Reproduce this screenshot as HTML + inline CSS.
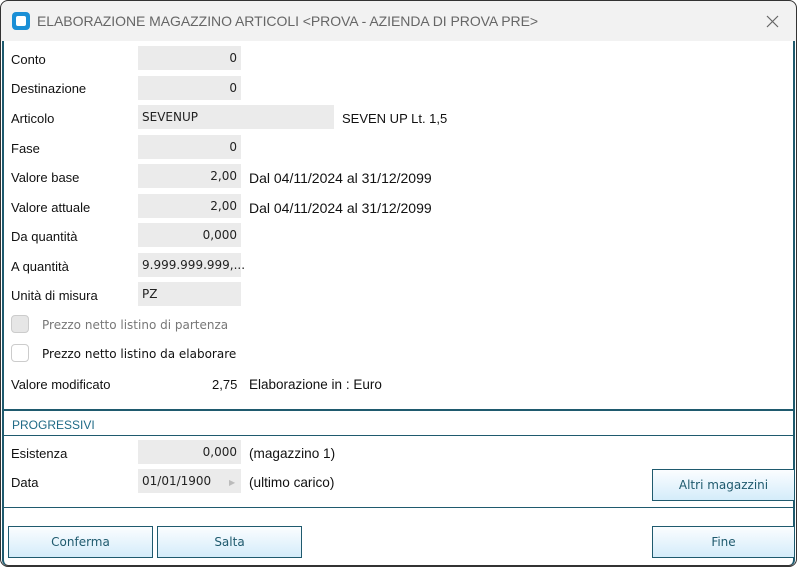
<!DOCTYPE html>
<html><head><meta charset="utf-8"><style>
*{margin:0;padding:0;box-sizing:border-box}
body{width:797px;height:568px;background:#fff;font-family:"DejaVu Sans","Liberation Sans",sans-serif;position:relative;overflow:hidden}
.win{position:absolute;left:0;top:0;width:797px;height:567px;border-radius:8px;overflow:hidden;background:#fff}
.outline{position:absolute;left:0;top:0;width:797px;height:567px;border:1px solid #333;border-radius:8px;z-index:5}
.title{position:absolute;left:0;top:0;width:797px;height:41px;background:#f2f2f2}
.title span{position:absolute;left:37px;top:13px;font-size:14px;color:#666;font-family:"Liberation Sans",sans-serif;letter-spacing:-0.05px}
.ico{position:absolute;left:12px;top:12px;width:18px;height:18px;background:#1a8fd6;border-radius:4px}
.ico:after{content:"";position:absolute;left:4px;top:4px;width:10px;height:10px;background:#fff;border-radius:2px}
.frame{position:absolute;left:2px;top:41px;width:793px;height:525px;border-left:2px solid #1f5a6e;border-right:2px solid #1f5a6e;border-bottom:1px solid #333;border-radius:0 0 6px 6px}
.l{position:absolute;left:11px;font-size:13px;color:#111;font-family:"Liberation Sans",sans-serif;margin-top:1px}
.f{position:absolute;left:138px;width:103px;height:24px;background:#ebebeb;font-size:12px;color:#222;line-height:25px;padding:0 4px;text-align:right}
.t{position:absolute;font-size:13px;color:#111;font-family:"Liberation Sans",sans-serif;margin-top:1px}
.w{font-size:14px}
.cb{position:absolute;left:11px;width:18px;height:18px;border:1px solid #ccc;border-radius:4px;background:#fff}
.hl{position:absolute;left:3px;width:791px;background:#1f5a6e}
.btn{position:absolute;height:32px;border:1px solid #1f5a6e;background:linear-gradient(#fbfdff,#d4ecfa);color:#1f5a6e;font-size:12px;text-align:center;line-height:31px}
</style></head><body>
<div class="win">
<div class="title"><div class="ico"></div><span>ELABORAZIONE MAGAZZINO ARTICOLI &lt;PROVA - AZIENDA DI PROVA PRE&gt;</span>
<svg style="position:absolute;left:766px;top:15px" width="13" height="13"><path d="M1 1L12 12M12 1L1 12" stroke="#666" stroke-width="1.2"/></svg></div>
<div class="frame"></div>
<div class="l" style="top:51px">Conto</div><div class="f" style="top:46px">0</div>
<div class="l" style="top:80px">Destinazione</div><div class="f" style="top:76px">0</div>
<div class="l" style="top:110px">Articolo</div><div class="f" style="top:105px;width:196px;text-align:left">SEVENUP</div><div class="t" style="left:342px;top:110px">SEVEN UP Lt. 1,5</div>
<div class="l" style="top:140px">Fase</div><div class="f" style="top:135px">0</div>
<div class="l" style="top:169px">Valore base</div><div class="f" style="top:164px">2,00</div><div class="t w" style="left:249px;top:169px">Dal 04/11/2024 al 31/12/2099</div>
<div class="l" style="top:199px">Valore attuale</div><div class="f" style="top:194px">2,00</div><div class="t w" style="left:249px;top:199px">Dal 04/11/2024 al 31/12/2099</div>
<div class="l" style="top:228px">Da quantità</div><div class="f" style="top:223px">0,000</div>
<div class="l" style="top:258px">A quantità</div><div class="f" style="top:253px">9.999.999.999,...</div>
<div class="l" style="top:287px">Unità di misura</div><div class="f" style="top:282px;text-align:left">PZ</div>
<div class="cb" style="top:315px;background:#e6e6e6"></div><div class="t" style="left:42px;top:317px;font-size:12px;color:#777;font-family:'DejaVu Sans',sans-serif">Prezzo netto listino di partenza</div>
<div class="cb" style="top:344px"></div><div class="t" style="left:42px;top:346px;font-size:12px;font-family:'DejaVu Sans',sans-serif">Prezzo netto listino da elaborare</div>
<div class="l" style="top:376px">Valore modificato</div><div class="t" style="left:212px;top:376px">2,75</div><div class="t" style="left:249px;top:376px;font-size:13.5px">Elaborazione in : Euro</div>
<div class="hl" style="top:409px;height:2px"></div>
<div class="t" style="left:12px;top:417px;font-size:12px;color:#1f6a86">PROGRESSIVI</div>
<div class="hl" style="top:435px;height:1px"></div>
<div class="l" style="top:445px">Esistenza</div><div class="f" style="top:440px">0,000</div><div class="t" style="left:249px;top:445px;font-size:13.6px">(magazzino 1)</div>
<div class="l" style="top:474px">Data</div><div class="f" style="top:469px;text-align:left">01/01/1900 <span style="color:#bbb;font-size:8px;margin-left:14px">▶</span></div><div class="t" style="left:249px;top:474px;font-size:13.6px">(ultimo carico)</div>
<div class="btn" style="left:652px;top:469px;width:143px">Altri magazzini</div>
<div class="hl" style="top:507px;height:1px"></div>
<div class="btn" style="left:8px;top:526px;width:145px">Conferma</div>
<div class="btn" style="left:157px;top:526px;width:145px">Salta</div>
<div class="btn" style="left:652px;top:526px;width:143px">Fine</div>
</div>
<div class="outline"></div>
</body></html>
